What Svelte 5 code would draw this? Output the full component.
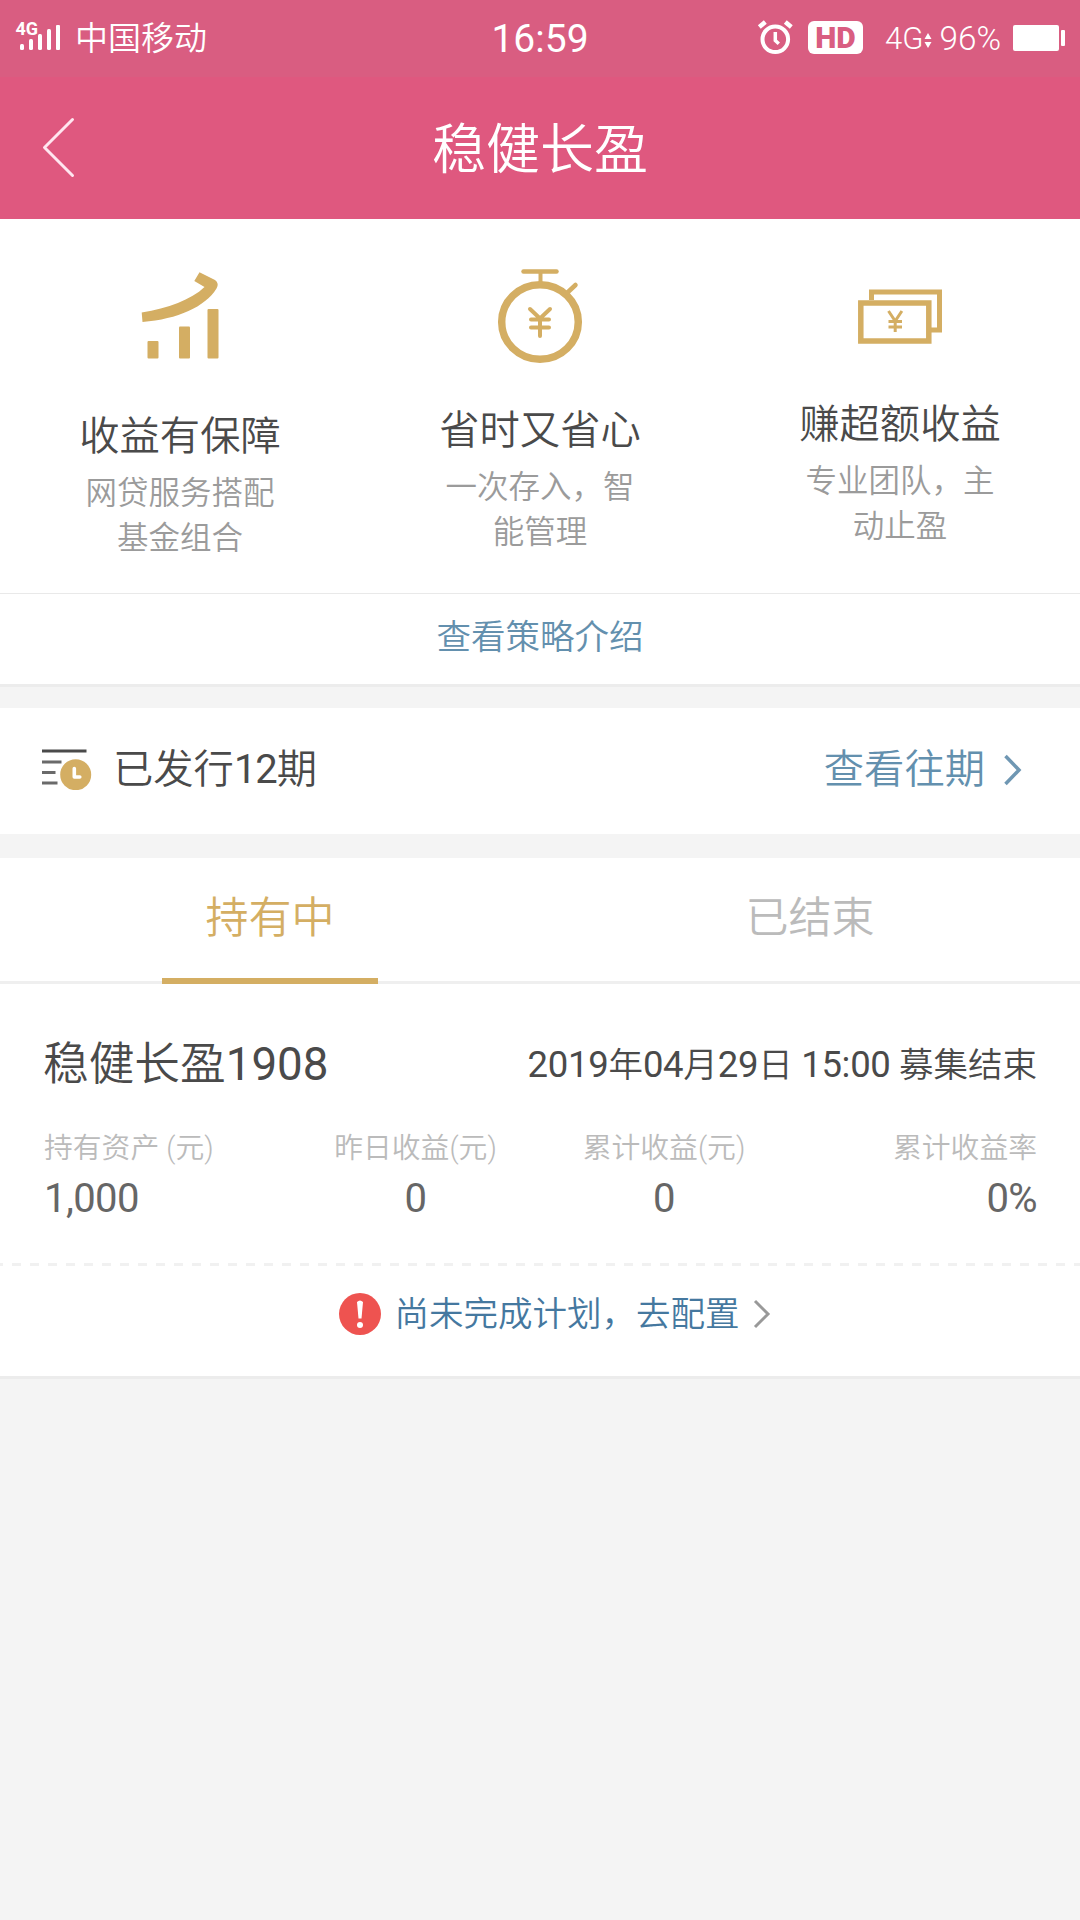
<script>
  const features = [
    { icon: 'growth', title: '收益有保障', lines: ['网贷服务搭配', '基金组合'] },
    { icon: 'watch', title: '省时又省心', lines: ['一次存入，智', '能管理'] },
    { icon: 'cash', title: '赚超额收益', lines: ['专业团队，主', '动止盈'] },
  ];
  const stats = [
    { label: '持有资产 (元)', value: '1,000' },
    { label: '昨日收益(元)', value: '0' },
    { label: '累计收益(元)', value: '0' },
    { label: '累计收益率', value: '0%' },
  ];
</script>

<div class="screen">
  <div class="status">
    <div class="side">
      <svg class="signal" width="52" height="40" viewBox="12 13 52 40">
        <text x="15.500" y="34" class="net">4G</text>
        <g fill="#fff">
          <rect x="20" y="43" width="4" height="6" rx="1.500" />
          <rect x="29" y="38" width="4" height="11" rx="1.500" />
          <rect x="38" y="33" width="4" height="16" rx="1.500" />
          <rect x="47" y="28" width="4" height="21" rx="1.500" />
          <rect x="56" y="24" width="4" height="25" rx="1" />
        </g>
      </svg>
      <span class="carrier">中国移动</span>
    </div>
    <span class="clock">16:59</span>
    <div class="side right">
      <svg class="alarm" width="36" height="36" viewBox="757 19 36 36" fill="none" stroke="#fff">
        <circle cx="775.300" cy="39.300" r="12.800" stroke-width="4" />
        <path d="M775.300 32v8.500l3.500 3.200" stroke-width="3.500" />
        <path d="M759.300 27l6-5M791.300 27l-6-5" stroke-width="4.500" />
      </svg>
      <span class="hd">HD</span>
      <span class="lte">4G</span>
      <svg class="updown" width="8" height="16" viewBox="0 0 8 16" fill="#fff">
        <path d="M4 0l3.500 6H.5zM4 15L.5 9h7z" />
      </svg>
      <span class="percent">96%</span>
      <svg class="battery" width="53" height="26" viewBox="0 0 53 26" fill="#fff">
        <rect width="46" height="26" rx="2" />
        <rect x="48" y="5" width="4" height="16" rx="1" />
      </svg>
    </div>
  </div>

  <header class="bar">
    <svg class="back" width="34" height="62" viewBox="42 116 34 62" fill="none" stroke="#ffe6f0" stroke-width="3" stroke-linecap="round" stroke-linejoin="round">
      <path d="M72.500 118.500L44.500 146.500L72.500 174.500" />
    </svg>
    <h1>稳健长盈</h1>
  </header>

  <section class="features">
    {#each features as f}
      <div class="feature">
        {#if f.icon === 'growth'}
          <svg width="120" height="153" viewBox="120 252 120 153" fill="#d4ae63">
            <rect x="147.500" y="341" width="11" height="17.500" rx="1" />
            <rect x="179" y="326.500" width="11" height="32" rx="1" />
            <rect x="207.500" y="309" width="11" height="49.500" rx="1" />
            <path d="M199.500 272.300L215 280Q219.500 283.500 216.500 288.500C205 307 178 319 142.500 322L141.700 312.500C168 308 191 300 204.500 287L194.300 281Z" />
          </svg>
        {:else if f.icon === 'watch'}
          <svg width="120" height="141" viewBox="480 258 120 141" fill="none" stroke="#d4ae63">
            <ellipse cx="540" cy="322" rx="38.300" ry="37.300" stroke-width="7.500" />
            <path d="M523.500 271.500h33" stroke-width="4.500" stroke-linecap="round" />
            <path d="M540.500 273v10" stroke-width="4" />
            <path d="M567.500 292.500l8-7.500" stroke-width="4.500" stroke-linecap="round" />
            <path d="M530 309l10 9.500l10-9.500M531 319.500h18M531 327.500h18M540 318v18" stroke-width="4" stroke-linecap="round" />
          </svg>
        {:else}
          <svg width="120" height="129" viewBox="840 264 120 129" fill="none" stroke="#d4ae63">
            <path d="M871.500 300v-8h68v38h-10" stroke-width="5" />
            <rect x="860.800" y="303" width="68" height="38" stroke-width="5.500" />
            <path d="M888.500 311l6.700 10l6.700-10M888.500 321.500h13.500M888.500 327h13.500M895.200 320v12" stroke-width="3" />
          </svg>
        {/if}
        <h2>{f.title}</h2>
        <p>{#each f.lines as line}<span>{line}</span>{/each}</p>
      </div>
    {/each}
  </section>
  <a class="strategy" href="#strategy">查看策略介绍</a>

  <section class="issued">
    <svg class="list" width="52" height="42" viewBox="42 748 52 42">
      <g fill="none" stroke="#4a4a4a" stroke-width="2.800">
        <path d="M42 751h44.500" />
        <path d="M42 762h19.500M42 772.500h13.500M42 783h15.500" stroke="#6a6a6a" />
      </g>
      <circle cx="75.700" cy="774.700" r="15.500" fill="#d4ae63" />
      <path d="M74.300 768.500v8.500h5.500" fill="none" stroke="#fff" stroke-width="3.600" stroke-linecap="round" stroke-linejoin="round" />
    </svg>
    <span class="count">已发行<span class="num">12</span>期</span>
    <a href="#past">查看往期</a>
    <svg class="go" width="20" height="34" viewBox="0 0 20 34" fill="none" stroke="#6f97b3" stroke-width="3.500">
      <path d="M2.500 3l13.500 14L2.500 31" />
    </svg>
  </section>

  <nav class="tabs">
    <span class="tab active">持有中</span>
    <span class="tab">已结束</span>
  </nav>

  <section class="holding">
    <div class="heading">
      <h3>稳健长盈<span class="num">1908</span></h3>
      <time><span class="num">2019</span>年<span class="num">04</span>月<span class="num">29</span>日 <span class="num">15:00</span> 募集结束</time>
    </div>
    <div class="stats">
      {#each stats as s}
        <div class="stat">
          <span class="label">{s.label}</span>
          <span class="value">{s.value}</span>
        </div>
      {/each}
    </div>
    <div class="dashes"></div>
    <div class="todo">
      <svg width="42" height="42" viewBox="0 0 42 42">
        <circle cx="21" cy="21" r="21" fill="#ee5350" />
        <path d="M18 9q3-3 6 0l-1.500 16.500h-3z" fill="#fff" />
        <circle cx="21" cy="32" r="3" fill="#fff" />
      </svg>
      <a href="#setup">尚未完成计划，去配置</a>
      <svg width="20" height="30" viewBox="0 0 20 30" fill="none" stroke="#999" stroke-width="3">
        <path d="M2 2l13 13L2 28" />
      </svg>
    </div>
  </section>
</div>

<style>
  :global(body) { background: #f4f4f4; }
  .screen {
    width: 1080px;
    height: 1920px;
    overflow: hidden;
    background: #f4f4f4;
    color: #4a4a4a;
    font-family: Roboto, "Noto Sans CJK SC", sans-serif;
    font-weight: 350;
  }
  .screen * { box-sizing: border-box; }
  svg { display: block; flex: none; }
  h1, h2, h3, p { margin: 0; font-weight: 350; }
  a { text-decoration: none; }
  .num { font-weight: 400; }

  .status {
    display: grid;
    grid-template-columns: 1fr auto 1fr;
    align-items: center;
    height: 77px;
    background: #d95d81;
    color: #fff;
    white-space: nowrap;
  }
  .side { display: flex; align-items: center; height: 74px; padding-left: 12px; }
  .side.right { justify-content: flex-end; padding: 0 14px 0 0; }
  .signal { margin-top: -11px; }
  .net { font: 700 18px Roboto, sans-serif; fill: #fff; }
  .carrier { margin-left: 11px; font-size: 33px; line-height: 40px; margin-top: -1px; }
  .clock { font-size: 39px; font-weight: 400; line-height: 77px; padding-top: 1px; }
  .alarm { margin-top: -4px; }
  .hd {
    width: 55px;
    height: 33px;
    margin: -4px 0 0 15px;
    border-radius: 6px;
    background: #fff;
    color: #d95d81;
    font: 900 30px/33px Roboto, sans-serif;
    text-align: center;
  }
  .lte { margin-left: 22px; font-size: 31px; line-height: 40px; }
  .updown { margin: 4px 7px 0 1px; }
  .percent { margin-right: 12px; font-size: 33.300px; line-height: 40px; }
  .battery { margin-top: -2px; }

  .bar {
    display: grid;
    grid-template-columns: 1fr auto 1fr;
    align-items: center;
    height: 142px;
    background: #df587f;
    color: #fff;
  }
  .back { margin-left: 42px; }
  .bar h1 { font-size: 54px; line-height: 136px; padding-top: 5px; }

  .features {
    display: flex;
    align-items: center;
    height: 375px;
    border-bottom: 1px solid #e9e9e9;
    background: #fff;
  }
  .feature { flex: 1; display: flex; flex-direction: column; align-items: center; }
  .feature h2 { font-size: 40.300px; line-height: 60px; padding-top: 2px; }
  .feature p {
    display: flex;
    flex-direction: column;
    align-items: center;
    padding-top: 4px;
    color: #9b9b9b;
    font-size: 31.500px;
    line-height: 45px;
  }
  .strategy {
    display: block;
    height: 93px;
    border-bottom: 3px solid #ececec;
    background: #fff;
    color: #6390ae;
    font-size: 34.500px;
    line-height: 86px;
    text-align: center;
  }

  .issued {
    display: flex;
    align-items: center;
    height: 126px;
    margin: 21px 0 24px;
    padding: 0 57px 0 42px;
    background: #fff;
    font-size: 40.300px;
    line-height: 124px;
  }
  .list { margin-top: -4px; }
  .count { flex: 1; margin-left: 19px; margin-top: -2px; }
  .count .num { font-size: 40px; letter-spacing: -1px; }
  .issued a { color: #6390ae; margin-top: -2px; }
  .go { margin: -2px 0 0 18px; }

  .tabs {
    display: flex;
    height: 126px;
    border-bottom: 3px solid #efefef;
    background: #fff;
  }
  .tab {
    flex: 1;
    display: flex;
    flex-direction: column;
    align-items: center;
    padding-top: 1px;
    color: #bbb;
    font-size: 43px;
    line-height: 119px;
  }
  .tab.active { color: #d4ae63; }
  .tab.active::after { content: ""; flex: none; width: 216px; height: 6px; background: #d4ae63; }

  .holding { height: 395px; border-bottom: 3px solid #ececec; background: #fff; }
  .heading {
    display: flex;
    justify-content: space-between;
    align-items: center;
    height: 112px;
    padding: 50px 43px 0 43px;
    white-space: nowrap;
  }
  .heading h3 { font-size: 45.700px; line-height: 60px; }
  .heading time { font-size: 34.500px; line-height: 60px; }
  time .num { font-size: 36.500px; letter-spacing: -0.300px; }
  .stats {
    display: grid;
    grid-template-columns: 247px 249px 248px 1fr;
    height: 167px;
    padding: 29px 43px 0 44px;
  }
  .stat { display: flex; flex-direction: column; align-items: center; white-space: nowrap; }
  .stat:first-child { align-items: flex-start; }
  .stat:last-child { align-items: flex-end; }
  .label { color: #bbb; font-size: 28.800px; line-height: 46px; }
  .value { color: #666; font-size: 40px; font-weight: 400; letter-spacing: -0.600px; line-height: 55px; }
  .dashes {
    height: 3px;
    background: repeating-linear-gradient(90deg, #f1f1f1 0 9px, #fff 9px 18px);
    background-position: -6px 0;
    background-size: 1098px 3px;
  }
  .todo {
    display: flex;
    align-items: center;
    justify-content: center;
    height: 96px;
    padding-left: 31px;
  }
  .todo a { margin: 0 13px 0 14px; color: #45789f; font-size: 34.500px; line-height: 96px; }
</style>
